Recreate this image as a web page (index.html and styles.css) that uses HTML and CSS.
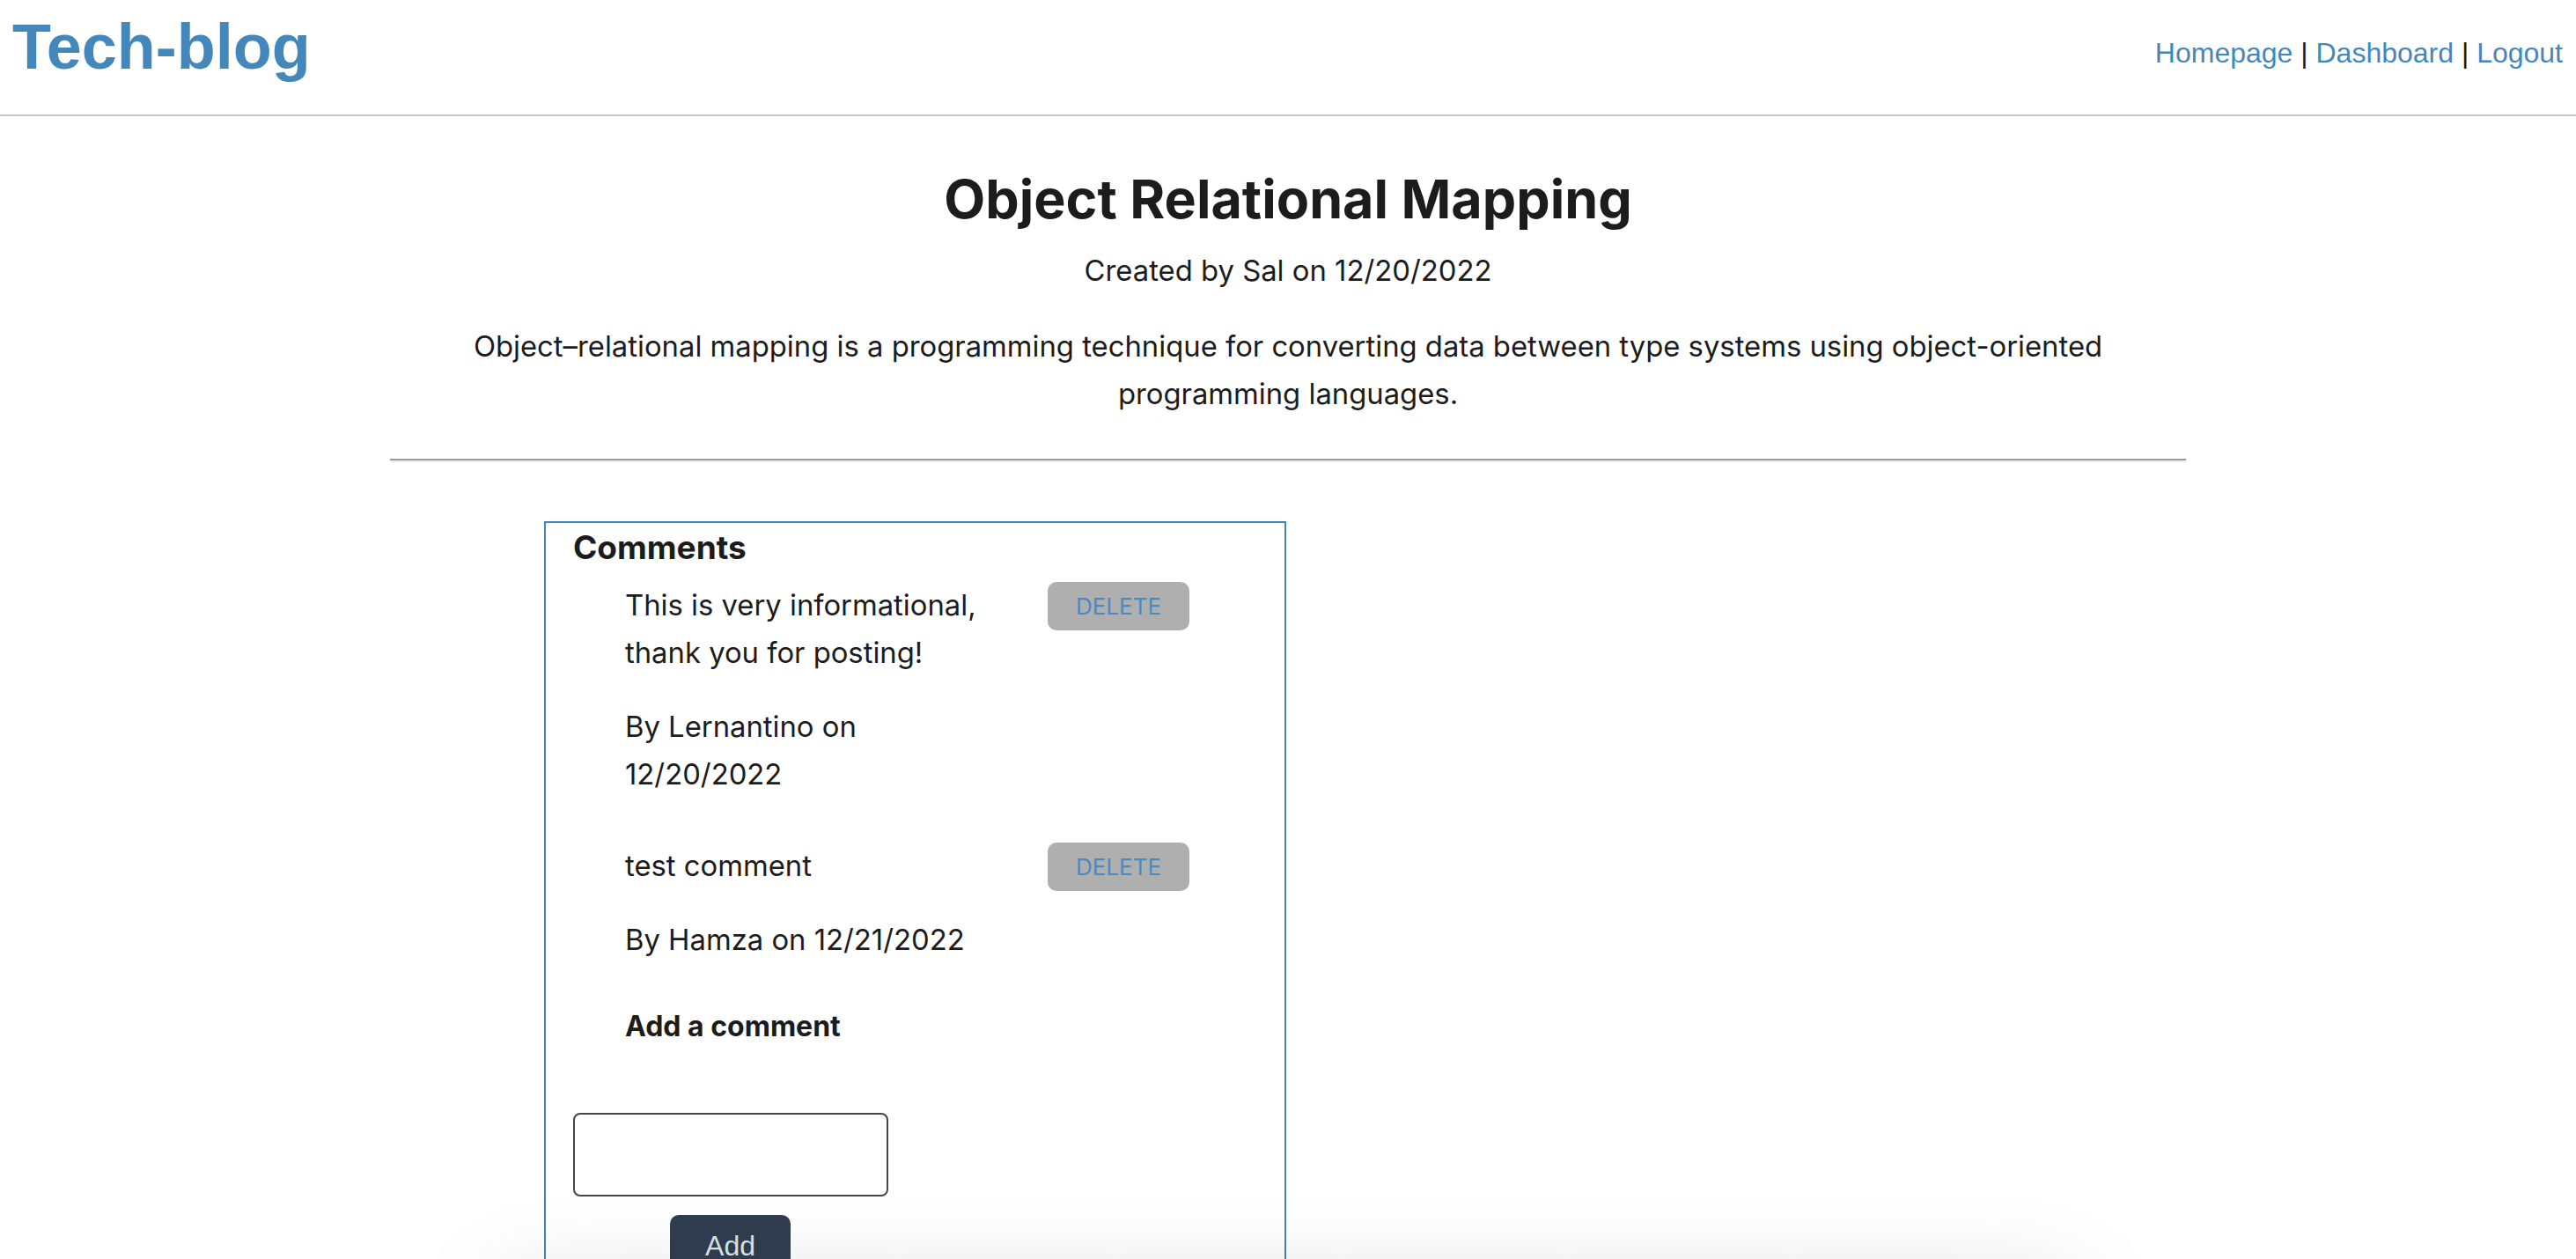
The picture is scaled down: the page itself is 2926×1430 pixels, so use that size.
FILE: index.html
```html
<!DOCTYPE html>
<html lang="en">
<head>
<meta charset="utf-8">
<title>Tech-blog</title>
<link rel="stylesheet" href="styles.css">
</head>
<body>
<header class="site-header">
  <a class="logo" href="#">Tech-blog</a>
  <nav class="nav">
    <a href="#">Homepage</a> | <a href="#">Dashboard</a> | <a href="#">Logout</a>
  </nav>
</header>
<main class="post">
  <h1 class="post-title">Object Relational Mapping</h1>
  <p class="post-meta">Created by Sal on 12/20/2022</p>
  <p class="post-body">Object–relational mapping is a programming technique for converting data between type systems using object-oriented programming languages.</p>
  <hr class="divider">
  <section class="comments">
    <h3 class="comments-title">Comments</h3>
    <div class="comment-list">
      <div class="comment">
        <div class="comment-text">
          <p>This is very informational, thank you for posting!</p>
          <p>By Lernantino on 12/20/2022</p>
        </div>
        <button class="delete-btn">DELETE</button>
      </div>
      <div class="comment">
        <div class="comment-text">
          <p>test comment</p>
          <p>By Hamza on 12/21/2022</p>
        </div>
        <button class="delete-btn">DELETE</button>
      </div>
      <h4 class="add-title">Add a comment</h4>
    </div>
    <form class="comment-form">
      <textarea class="comment-input"></textarea>
      <button class="add-btn" type="button">Add</button>
    </form>
  </section>
</main>
<footer class="site-footer"></footer>
</body>
</html>
```

FILE: styles.css
```css
html, body {
  margin: 0;
  padding: 0;
  background: #ffffff;
}

body {
  font-family: "Inter", "Noto Sans", sans-serif;
  color: #1c1c1c;
  font-size: 32.8px;
  line-height: 54px;
}

.site-header {
  display: flex;
  justify-content: space-between;
  align-items: flex-start;
  height: 132px;
  box-sizing: border-box;
  padding: 12px 15px 0 14px;
  border-bottom: 2px solid #c9c9c9;
}

.logo {
  font-family: "Liberation Sans", Arial, sans-serif;
  font-weight: 700;
  font-size: 72px;
  line-height: 83px;
  color: #4488bb;
  text-decoration: none;
}

.nav {
  font-family: "Liberation Sans", Arial, sans-serif;
  font-size: 32px;
  line-height: 37px;
  margin-top: 30px;
  color: #1c1c1c;
}

.nav a {
  color: #4488bb;
  text-decoration: none;
}

.post {
  width: 2040px;
  margin: 0 auto;
  text-align: center;
}

.post-title {
  font-size: 61px;
  line-height: 72px;
  font-weight: 700;
  margin: 58px 0 0;
}

.post-meta {
  margin: 18px 0 0;
}

.post-body {
  margin: 32px 0 0;
}

.divider {
  margin: 47px 0 0;
  height: 0;
  border: 0;
  border-top: 2px solid #999999;
  border-bottom: 2px solid #ececec;
}

.comments {
  width: 843px;
  box-sizing: border-box;
  margin: 67px 0 0 175px;
  padding: 6px 31px 30px;
  border: 2px solid #3f85bd;
  text-align: left;
}

.comments-title {
  font-size: 37px;
  line-height: 44px;
  font-weight: 700;
  margin: 0;
}

.comment-list {
  padding-left: 59px;
  padding-top: 16px;
}

.comment {
  display: grid;
  grid-template-columns: 420px auto;
  column-gap: 60px;
  align-items: start;
  margin-bottom: 50px;
}

.comment:last-of-type {
  margin-bottom: 0;
}

.comment-text p {
  margin: 0;
}

.comment-text p + p {
  margin-top: 30px;
}

.delete-btn {
  justify-self: start;
  width: 161px;
  height: 55px;
  margin-top: 1px;
  border: none;
  border-radius: 10px;
  background: #afafaf;
  color: #4a8ac0;
  font-family: "Inter", "Noto Sans", sans-serif;
  font-size: 26px;
  padding: 0;
}

.add-title {
  font-size: 32px;
  line-height: 54px;
  font-weight: 700;
  margin: 45px 0 0;
}

.comment-form {
  display: flex;
  flex-direction: column;
  align-items: flex-start;
  margin-top: 71px;
}

.comment-input {
  width: 358px;
  height: 95px;
  box-sizing: border-box;
  border: 2px solid #464646;
  border-radius: 8px;
  resize: none;
  padding: 4px;
}

.add-btn {
  margin: 21px 0 0 110px;
  width: 137px;
  height: 70px;
  border: none;
  border-radius: 10px;
  background: #2f3c4d;
  color: #d5e0e3;
  font-family: "Liberation Sans", Arial, sans-serif;
  font-size: 32px;
  padding: 0;
}

.site-footer {
  width: 1700px;
  height: 120px;
  margin: 30px auto 0;
  box-shadow: 0 0 120px 40px rgba(0, 0, 0, 0.18);
}
```
